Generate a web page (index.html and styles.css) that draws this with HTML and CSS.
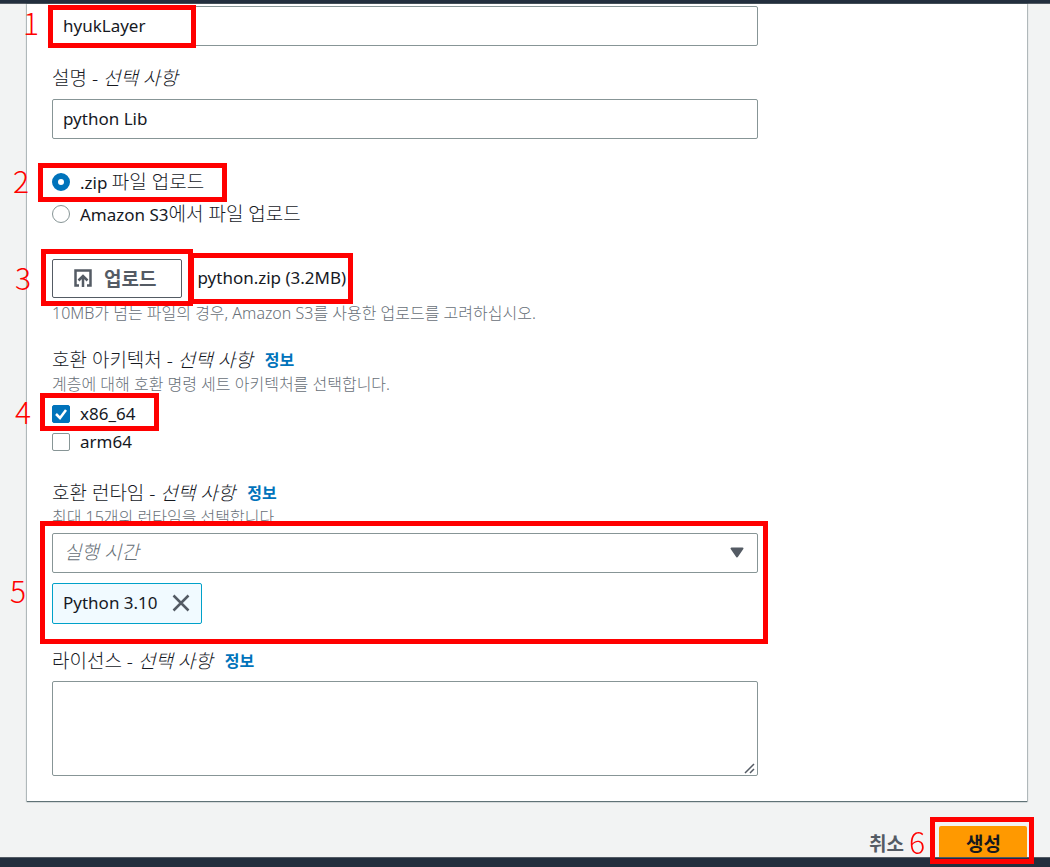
FILE: index.html
```html
<!DOCTYPE html>
<html lang="ko">
<head>
    <meta charset="UTF-8">
    <meta name="viewport" content="width=device-width, initial-scale=1.0">
    <title>계층 생성</title>
    <link rel="stylesheet" href="styles.css">
</head>
<body>
    <header class="top-bar"></header>
    <main>
        <form id="layerForm">
            <div class="card">
                <div class="fields">
                    <div class="field name-field">
                        <input class="text-input" type="text" name="name" value="hyukLayer" aria-label="이름">
                        <span class="mark mark-name"></span>
                        <span class="step step-name">1</span>
                    </div>

                    <div class="field description-field">
                        <label class="field-label" for="description">설명 - <i>선택 사항</i></label>
                        <input class="text-input" type="text" id="description" name="description" value="python Lib">
                    </div>

                    <div class="field source-field">
                        <div class="choice">
                            <input type="radio" id="sourceZip" name="source" checked>
                            <label for="sourceZip">.zip <span class="ko">파일 업로드</span></label>
                        </div>
                        <div class="choice">
                            <input type="radio" id="sourceS3" name="source">
                            <label for="sourceS3">Amazon S3<span class="ko">에서 파일 업로드</span></label>
                        </div>
                        <span class="mark mark-source"></span>
                        <span class="step step-source">2</span>
                    </div>

                    <div class="field upload-field">
                        <div class="upload-row">
                            <button class="upload-button" type="button">
                                <svg width="18" height="18" viewBox="0 0 18 18" fill="none" stroke="currentColor" stroke-width="2.500">
                                    <path d="M5 16.500H1.500v-15h15v15H13M9 18V7M4.500 11.500L9 7l4.500 4.500"/>
                                </svg>
                                업로드
                            </button>
                            <span class="file-name">python.zip (3.2MB)</span>
                        </div>
                        <p class="hint">10MB가 넘는 파일의 경우, Amazon S3를 사용한 업로드를 고려하십시오.</p>
                        <span class="mark mark-upload"></span>
                        <span class="mark mark-file"></span>
                        <span class="step step-upload">3</span>
                    </div>

                    <div class="field arch-field">
                        <div class="label-row">
                            <span class="field-label">호환 아키텍처 - <i>선택 사항</i></span>
                            <a class="info" href="#">정보</a>
                        </div>
                        <p class="hint">계층에 대해 호환 명령 세트 아키텍처를 선택합니다.</p>
                        <div class="checks">
                            <div class="choice">
                                <input type="checkbox" id="x86" name="arch" checked>
                                <label for="x86">x86_64</label>
                            </div>
                            <div class="choice">
                                <input type="checkbox" id="arm" name="arch">
                                <label for="arm">arm64</label>
                            </div>
                            <span class="mark mark-arch"></span>
                            <span class="step step-arch">4</span>
                        </div>
                    </div>

                    <div class="field runtime-field">
                        <div class="label-row">
                            <label class="field-label" for="runtime">호환 런타임 - <i>선택 사항</i></label>
                            <a class="info" href="#">정보</a>
                        </div>
                        <p class="hint">최대 15개의 런타임을 선택합니다.</p>
                        <div class="runtime-box">
                            <div class="select-wrap">
                                <select id="runtime" name="runtime">
                                    <option>실행 시간</option>
                                </select>
                                <svg class="caret" width="14" height="11" viewBox="0 0 14 11">
                                    <path d="M1.500 1.500h11L7 9.500z" fill="#545b64" stroke="#545b64" stroke-width="2" stroke-linejoin="round"/>
                                </svg>
                            </div>
                            <div class="token">
                                Python 3.10
                                <button type="button" aria-label="제거">
                                    <svg width="18" height="18" viewBox="0 0 18 18" fill="none" stroke="currentColor" stroke-width="2.500">
                                        <path d="M1.500 1.500l15 15M16.500 1.500l-15 15"/>
                                    </svg>
                                </button>
                            </div>
                            <span class="mark mark-runtime"></span>
                            <span class="step step-runtime">5</span>
                        </div>
                    </div>

                    <div class="field license-field">
                        <div class="label-row">
                            <label class="field-label" for="license">라이선스 - <i>선택 사항</i></label>
                            <a class="info" href="#">정보</a>
                        </div>
                        <textarea id="license" name="license"></textarea>
                    </div>
                </div>
            </div>

            <div class="actions">
                <button class="cancel" type="button">취소</button>
                <div class="create-wrap">
                    <button class="create" type="submit">생성</button>
                    <span class="mark mark-create"></span>
                    <span class="step step-create">6</span>
                </div>
            </div>
        </form>
    </main>
    <footer class="bottom-bar"></footer>
</body>
</html>
```
FILE: styles.css
```css
* {
    box-sizing: border-box;
}

body {
    margin: 0;
    min-height: 100vh;
    background-color: #f2f3f3;
    color: #16191f;
    font-family: "Noto Sans", "Noto Sans CJK KR", sans-serif;
    font-size: 17px;
}

input,
button,
select,
textarea {
    margin: 0;
    font-family: inherit;
    font-size: inherit;
    color: inherit;
}

.top-bar {
    height: 4px;
    background-color: #232f3e;
    border-bottom: 1px solid #545b64;
}

.bottom-bar {
    position: fixed;
    left: 0;
    right: 0;
    bottom: 0;
    z-index: 1;
    height: 10px;
    background-color: #232f3e;
    border-top: 1px solid #545b64;
}

.card {
    margin: 0 23px 0 27px;
    padding: 2px 25px 25px;
    background-color: #fff;
    box-shadow: 0 1px 1px 0 rgba(0, 28, 36, 0.5), 0 0 1px 1px rgba(0, 28, 36, 0.2);
}

.fields {
    max-width: 706px;
}

.field {
    position: relative;
}

.text-input {
    display: block;
    width: 100%;
    height: 40px;
    padding: 0 10px 2px;
    border: 1px solid #879596;
    border-radius: 2px;
    background-color: #fff;
}

/* labels */
.field-label {
    display: block;
    font-size: 19px;
    font-weight: 300;
    line-height: 24px;
}

.label-row {
    display: flex;
    align-items: center;
    gap: 12px;
}

.info {
    padding-top: 1px;
    color: #0073bb;
    font-size: 16px;
    font-weight: 700;
    line-height: 23px;
    text-decoration: none;
}

.hint {
    margin: 0;
    color: #687078;
    font-size: 16px;
    font-weight: 300;
    line-height: 24px;
}

.ko {
    font-size: 19px;
    font-weight: 300;
}

.description-field {
    margin-top: 20px;
}

.description-field .text-input {
    margin-top: 9px;
}

/* radios and checkboxes */
.choice {
    display: flex;
    align-items: center;
    gap: 10px;
}

.choice label {
    padding-bottom: 2px;
}

.choice input {
    appearance: none;
    width: 18px;
    height: 18px;
    border: 1px solid #879596;
    background-color: #fff;
}

.choice input[type="radio"] {
    border-radius: 50%;
}

.choice input[type="radio"]:checked {
    border: 6px solid #0073bb;
}

.choice input[type="checkbox"] {
    border-radius: 2px;
}

.choice input[type="checkbox"]:checked {
    border-color: #0073bb;
    background: #0073bb url("data:image/svg+xml,%3Csvg xmlns='http://www.w3.org/2000/svg' viewBox='0 0 16 16'%3E%3Cpath d='M3 8l4 4 6-8' fill='none' stroke='white' stroke-width='2.5'/%3E%3C/svg%3E") center / 16px no-repeat;
}

.source-field {
    margin-top: 27px;
}

.source-field .choice {
    height: 32px;
}

.source-field .choice label {
    padding-bottom: 3px;
}

/* upload */
.upload-field {
    margin-top: 29px;
}

.upload-row {
    display: flex;
    align-items: center;
    gap: 15px;
}

.upload-button {
    display: flex;
    align-items: center;
    gap: 12px;
    height: 39px;
    padding: 0 25px 2px 21px;
    border: 1px solid #545b64;
    border-radius: 2px;
    background-color: #fff;
    color: #545b64;
    font-size: 19px;
    font-weight: 700;
}

.file-name {
    padding-bottom: 2px;
}

.upload-field .hint {
    margin-top: 3px;
}

.arch-field {
    margin-top: 23px;
}

.checks {
    position: relative;
    padding-top: 4px;
}

.checks .choice {
    height: 28px;
}

.runtime-field {
    margin-top: 25px;
}

.runtime-box {
    position: relative;
    padding-top: 4px;
}

.select-wrap {
    position: relative;
}

select {
    appearance: none;
    display: block;
    width: 100%;
    height: 40px;
    padding: 0 11px 2px;
    border: 1px solid #879596;
    border-radius: 2px;
    background-color: #fff;
    color: #687078;
    font-size: 19px;
    font-style: italic;
    font-weight: 300;
}

.caret {
    position: absolute;
    right: 14px;
    top: 14px;
    pointer-events: none;
}

.token {
    display: inline-flex;
    align-items: center;
    gap: 14px;
    height: 41px;
    margin-top: 10px;
    padding: 0 11px 2px 10px;
    border: 1px solid #00a1c9;
    border-radius: 2px;
    background-color: #f1faff;
}

.token button {
    display: flex;
    padding: 0;
    border: 0;
    background: none;
    color: #545b64;
}

.license-field {
    margin-top: 25px;
}

textarea {
    display: block;
    width: 100%;
    height: 95px;
    margin-top: 8px;
    border: 1px solid #879596;
    border-radius: 2px;
    background-color: #fff;
}

textarea::-webkit-resizer {
    background: url("data:image/svg+xml,%3Csvg xmlns='http://www.w3.org/2000/svg' viewBox='0 0 15 15'%3E%3Cpath d='M3 13l9-9M8 13l4-4' fill='none' stroke='%23545b64' stroke-width='1.5'/%3E%3C/svg%3E") center / 15px no-repeat;
}

/* form buttons */
.actions {
    display: flex;
    justify-content: flex-end;
    gap: 35px;
    padding: 25px 23px 0 0;
}

.actions button {
    height: 36px;
    padding-bottom: 3px;
    border: 0;
    font-size: 19px;
    font-weight: 700;
}

.actions .cancel {
    padding-left: 0;
    padding-right: 0;
    background: none;
    color: #545b64;
}

.create-wrap {
    position: relative;
}

.actions .create {
    padding-left: 27px;
    padding-right: 26px;
    border-radius: 2px;
    background-color: #ff9900;
}

/* red step marks over the form */
.mark {
    position: absolute;
    z-index: 2;
    border: 5px solid #f00;
    pointer-events: none;
}

.step {
    position: absolute;
    z-index: 2;
    color: #f00;
    font-family: "Noto Sans CJK KR", sans-serif;
    font-size: 30px;
    font-weight: 300;
    line-height: 30px;
}

.mark-name {
    left: -4px;
    top: -1px;
    width: 148px;
    height: 43px;
}

.step-name {
    left: -29px;
    top: 1px;
}

.mark-source {
    left: -14px;
    top: -3px;
    width: 189px;
    height: 39px;
}

.step-source {
    left: -39px;
    top: -1px;
}

.mark-upload {
    left: -11px;
    top: -10px;
    width: 152px;
    height: 57px;
}

.mark-file {
    left: 137px;
    top: -6px;
    width: 164px;
    height: 51px;
}

.step-upload {
    left: -37px;
    top: 3px;
}

.mark-arch {
    left: -12px;
    top: -3px;
    width: 119px;
    height: 38px;
}

.step-arch {
    left: -37px;
    top: 0;
}

.mark-runtime {
    left: -12px;
    right: -10px;
    top: -8px;
    height: 123px;
}

.step-runtime {
    left: -42px;
    top: 46px;
}

.mark-create {
    left: -9px;
    right: -7px;
    top: -9px;
    height: 47px;
}

.step-create {
    left: -30px;
    top: 0;
}
```
